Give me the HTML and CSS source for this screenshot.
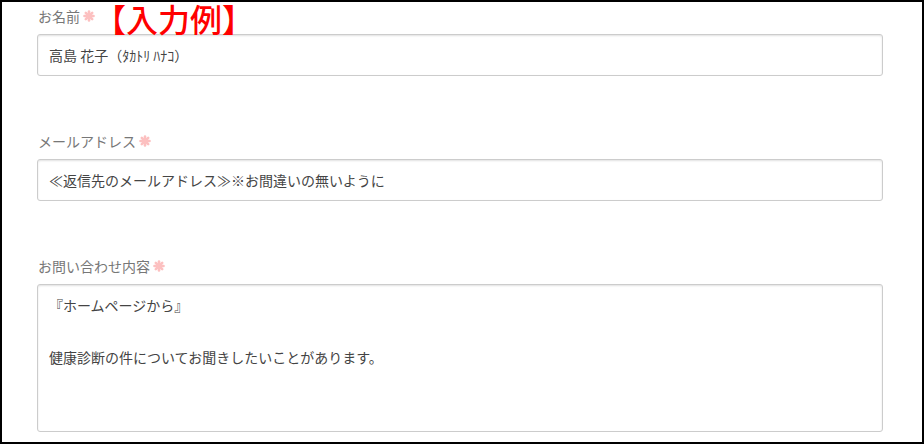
FILE: index.html
```html
<!DOCTYPE html>
<html lang="ja">
<head>
<meta charset="utf-8">
<title>お問い合わせ</title>
<link rel="stylesheet" href="styles.css">
</head>
<body>
<form class="form">
  <div class="field">
    <div class="label">お名前<svg class="req" viewBox="0 0 12 12"><g stroke="currentColor" stroke-width="2.6" stroke-linecap="round"><line x1="6" y1="1.5" x2="6" y2="10.5"/><line x1="1.5" y1="6" x2="10.5" y2="6"/><line x1="2.8" y1="2.8" x2="9.2" y2="9.2"/><line x1="9.2" y1="2.8" x2="2.8" y2="9.2"/></g></svg></div>
    <span class="example">【入力例】</span>
    <input class="input" type="text" value="高島 花子（ﾀｶﾄﾘ ﾊﾅｺ）">
  </div>
  <div class="field">
    <div class="label">メールアドレス<svg class="req" viewBox="0 0 12 12"><g stroke="currentColor" stroke-width="2.6" stroke-linecap="round"><line x1="6" y1="1.5" x2="6" y2="10.5"/><line x1="1.5" y1="6" x2="10.5" y2="6"/><line x1="2.8" y1="2.8" x2="9.2" y2="9.2"/><line x1="9.2" y1="2.8" x2="2.8" y2="9.2"/></g></svg></div>
    <input class="input" type="text" value="≪返信先のメールアドレス≫※お間違いの無いように">
  </div>
  <div class="field">
    <div class="label">お問い合わせ内容<svg class="req" viewBox="0 0 12 12"><g stroke="currentColor" stroke-width="2.6" stroke-linecap="round"><line x1="6" y1="1.5" x2="6" y2="10.5"/><line x1="1.5" y1="6" x2="10.5" y2="6"/><line x1="2.8" y1="2.8" x2="9.2" y2="9.2"/><line x1="9.2" y1="2.8" x2="2.8" y2="9.2"/></g></svg></div>
    <textarea class="input textarea">『ホームページから』

健康診断の件についてお聞きしたいことがあります。</textarea>
  </div>
</form>
</body>
</html>
```
FILE: styles.css
```css
html, body {
  margin: 0;
  padding: 0;
}
body {
  width: 924px;
  height: 444px;
  box-sizing: border-box;
  border: 2px solid #000;
  background: #fff;
  font-family: "Noto Sans CJK JP", "Noto Sans", sans-serif;
}
.form {
  display: flex;
  flex-direction: column;
  gap: 51px;
  padding: 0 39px 0 35px;
}
.field {
  position: relative;
  display: flex;
  flex-direction: column;
  padding-top: 4px;
}
.label {
  display: flex;
  align-items: center;
  height: 20px;
  margin-bottom: 8px;
  padding-left: 1px;
  font-size: 14px;
  color: #777;
  line-height: 20px;
}
.req {
  width: 12px;
  height: 12px;
  margin-left: 3px;
  color: #fcc0c0;
}
.example {
  position: absolute;
  left: 57px;
  top: 0;
  font-size: 32px;
  line-height: 32px;
  font-weight: 500;
  color: #f00;
  white-space: nowrap;
}
.input {
  box-sizing: border-box;
  width: 846px;
  height: 42px;
  margin: 0;
  padding: 0 11px;
  border: 1px solid #ccc;
  border-radius: 3px;
  box-shadow: inset 0 1px 2px rgba(0, 0, 0, 0.12);
  background: #fff;
  font-family: "Noto Sans CJK JP", "Noto Sans", sans-serif;
  font-size: 14px;
  color: #444;
  outline: none;
}
.textarea {
  height: 148px;
  padding: 7px 11px;
  line-height: 26px;
  resize: none;
  overflow: hidden;
}
```
